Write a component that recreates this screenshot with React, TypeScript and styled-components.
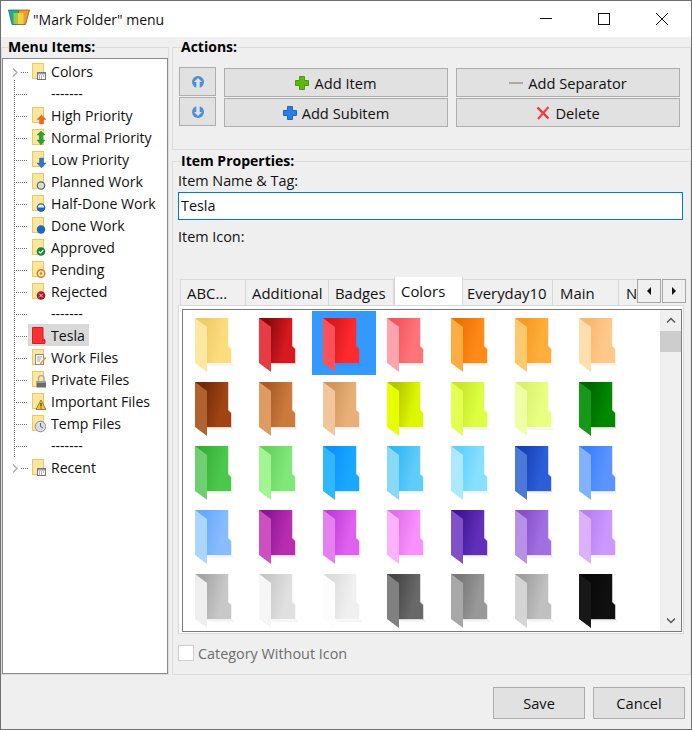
import React, { useId } from "react";
import styled, { createGlobalStyle } from "styled-components";

const GlobalStyle = createGlobalStyle`
  html, body { margin: 0; padding: 0; background: #efefef; }
  body {
    font-family: "Open Sans", "Noto Sans", "Liberation Sans", sans-serif;
    font-size: 14.4px;
    color: #111;
  }
  * { box-sizing: border-box; }
`;

const Window = styled.div`
  width: 692px;
  height: 730px;
  display: flex;
  flex-direction: column;
  border: 1px solid #6f6f6f;
  background: #efefef;
  overflow: hidden;
`;

const TitleBar = styled.div`
  height: 36px;
  flex: none;
  display: flex;
  align-items: center;
  background: #fff;
  padding-left: 7px;
`;

const LogoSlot = styled.div`
  display: flex;
  margin-bottom: 4px;
`;

const TitleText = styled.div`
  margin-left: 3px;
  flex: 1;
  font-size: 14px;
`;

const WinControl = styled.div`
  width: 58px;
  height: 36px;
  display: flex;
  align-items: center;
  justify-content: center;
`;

const Main = styled.div`
  height: 638px;
  flex: none;
  display: flex;
  gap: 3px;
`;

const Group = styled.fieldset`
  margin: 0;
  padding: 0;
  min-width: 0;
  border: 1px solid #dcdcdc;
`;

const GroupTitle = styled.legend<{ $inset: number }>`
  padding: 0;
  margin-left: ${(p) => p.$inset}px;
  height: 20px;
  line-height: 20px;
  font-weight: 700;
  font-size: 14px;
  color: #000;
`;

const MenuGroup = styled(Group)`
  width: 168px;
  height: 638px;
  flex: none;
`;

const TreeBox = styled.div`
  margin-top: 1px;
  height: 616px;
  background: #fff;
  border: 1px solid #8a8a8a;
  padding-top: 1px;
`;

const TreeRow = styled.div`
  height: 22px;
  display: flex;
`;

type GutterKind = "first" | "mid" | "last";

const DOTS_DOWN = "repeating-linear-gradient(to bottom, #777 0 1px, transparent 1px 2px)";
const DOTS_RIGHT = "repeating-linear-gradient(to right, #777 0 1px, transparent 1px 2px)";

const Gutter = styled.div<{ $kind: GutterKind }>`
  width: 25px;
  flex: none;
  display: flex;
  align-items: center;
  padding: 2px 0 0 9px;
  background-image: ${DOTS_DOWN}, ${DOTS_RIGHT};
  background-repeat: no-repeat;
  background-size:
    1px ${(p) => (p.$kind === "mid" ? 22 : 2)}px,
    ${(p) => (p.$kind === "mid" ? 12 : 7)}px 1px;
  background-position:
    11px ${(p) => (p.$kind === "first" ? 20 : 0)}px,
    ${(p) => (p.$kind === "mid" ? 13 : 18)}px 12px;
`;

const TreeItem = styled.div<{ $selected?: boolean }>`
  display: flex;
  align-items: center;
  gap: 5px;
  padding: 0 4px;
  font-size: 14.1px;
  background: ${(p) => (p.$selected ? "#d9d9d9" : "transparent")};
`;

const IconSlot = styled.div`
  width: 14px;
  height: 20px;
  padding-top: 2px;
  flex: none;
  display: flex;
`;

const RightColumn = styled.div`
  flex: 1;
  min-width: 0;
  display: flex;
  flex-direction: column;
`;

const ActionsGroup = styled(Group)`
  height: 113px;
  flex: none;
  padding: 11px 0 0 6px;
`;

const ActionsGrid = styled.div`
  display: grid;
  grid-template-columns: 37px 224px 224px;
  grid-template-rows: 29px 29px;
  column-gap: 8px;
  row-gap: 1px;
`;

const PushButton = styled.button`
  display: flex;
  align-items: center;
  justify-content: center;
  gap: 5px;
  padding: 0;
  background: #e1e1e1;
  border: 1px solid #adadad;
  font: inherit;
  font-size: 14.67px;
  color: #111;
`;

const ArrowButton = styled(PushButton)`
  width: 37px;
  height: 29px;
  margin-top: -1px;
`;

const ActionButton = styled(PushButton)`
  width: 224px;
  height: 29px;
`;

const PropsGroup = styled(Group)`
  margin-top: 1px;
  height: 524px;
  flex: none;
  padding: 0 6px 0 5px;
`;

const FieldLabel = styled.div`
  height: 20px;
  line-height: 20px;
`;

const NameInput = styled.input`
  display: block;
  width: 505px;
  height: 28px;
  margin-top: 1px;
  padding: 0 2px 1px 2px;
  background: #fff;
  border: 1px solid #0078d7;
  outline: none;
  font: inherit;
  color: #111;
`;

const IconLabel = styled(FieldLabel)`
  margin-top: 7px;
`;

const TabHeader = styled.div`
  margin-top: 30px;
  height: 28px;
  display: flex;
  width: 506px;
`;

const TabStrip = styled.div`
  width: 459px;
  flex: none;
  padding-left: 2px;
  display: flex;
  align-items: flex-end;
  overflow: hidden;
`;

const Tab = styled.div<{ $width: number; $pad: number; $active?: boolean }>`
  width: ${(p) => p.$width}px;
  flex: none;
  height: ${(p) => (p.$active ? 29 : 26)}px;
  padding-left: ${(p) => p.$pad}px;
  line-height: ${(p) => (p.$active ? 28 : 27)}px;
  font-size: 14.9px;
  background: ${(p) => (p.$active ? "#fff" : "#f0f0f0")};
  border: 1px solid #d9d9d9;
  border-left-width: ${(p) => (p.$active ? 1 : 0)}px;
  border-bottom: 0;
  white-space: nowrap;
  overflow: hidden;
  &:first-child { border-left-width: 1px; }
`;

const TabArrows = styled.div`
  display: flex;
  gap: 1px;
  margin-top: 2px;
`;

const TabArrow = styled.div`
  width: 24px;
  height: 24px;
  display: flex;
  align-items: center;
  justify-content: center;
  background: #f0f0f0;
  border: 1px solid #a6a6a6;
`;

const TabPanel = styled.div`
  width: 506px;
  height: 329px;
  background: #fff;
  border: 1px solid #d9d9d9;
  padding: 3px 1px 2px 3px;
`;

const IconList = styled.div`
  height: 323px;
  border: 1px solid #7a7a7a;
  display: flex;
  justify-content: space-between;
`;

const IconGrid = styled.div`
  padding: 1px 0 0 1px;
  display: grid;
  grid-template-columns: repeat(7, 64px);
  grid-auto-rows: 64px;
`;

const IconCell = styled.div<{ $selected?: boolean }>`
  padding: 7px 0 0 11px;
  background: ${(p) => (p.$selected ? "#3399ff" : "transparent")};
`;

const ScrollBar = styled.div`
  width: 21px;
  display: flex;
  flex-direction: column;
  background: #f0f0f0;
`;

const ScrollEnd = styled.div`
  height: 21px;
  flex: none;
  display: flex;
  align-items: center;
  justify-content: center;
`;

const ScrollThumb = styled.div`
  height: 21px;
  flex: none;
  background: #cdcdcd;
`;

const ScrollTrack = styled.div`
  flex: 1;
`;

const CheckRow = styled.div`
  margin-top: 11px;
  height: 16px;
  line-height: 18px;
  display: flex;
  gap: 4px;
  color: #6d6d6d;
`;

const CheckBox = styled.div`
  width: 16px;
  height: 16px;
  background: #fff;
  border: 1px solid #cfcfcf;
`;

const Footer = styled.div`
  flex: 1;
  display: flex;
  justify-content: flex-end;
  gap: 8px;
  padding: 12px 6px 0 0;
`;

const FooterButton = styled(PushButton)`
  width: 92px;
  height: 32px;
`;

type FolderTone = [string, string, string];

const FOLDERS: FolderTone[] = [
  ["#edcb68", "#fddc7e", "#ffe7a2"],
  ["#860a10", "#da1820", "#e63c42"],
  ["#d4181f", "#ff2a2e", "#ff5058"],
  ["#f4555f", "#ff7478", "#ffa4ac"],
  ["#ec7208", "#ff8a18", "#ffac42"],
  ["#f59a24", "#ffae3c", "#ffc86a"],
  ["#f8b673", "#ffc98a", "#ffdeae"],
  ["#742a0a", "#a04414", "#b2622e"],
  ["#a85a28", "#cc7a3c", "#de9c62"],
  ["#d0945c", "#e8b078", "#f1c69a"],
  ["#b4c400", "#dcf800", "#e8ff00"],
  ["#c6e630", "#dcff40", "#e4ff50"],
  ["#dcf070", "#e8ff80", "#f0ffa4"],
  ["#006400", "#008800", "#189818"],
  ["#38b038", "#4cc84c", "#70d070"],
  ["#68d060", "#80e878", "#a2f692"],
  ["#1090ff", "#18a8ff", "#30b8ff"],
  ["#30b8f8", "#60ccf8", "#88d8f8"],
  ["#60d0ff", "#88e0ff", "#ace9ff"],
  ["#1840b8", "#2c5ed8", "#4c78d8"],
  ["#3c80ff", "#5a94ff", "#82b2ff"],
  ["#68a8ff", "#88bcff", "#aad6ff"],
  ["#8e1696", "#b82cb0", "#cc50c0"],
  ["#c040d8", "#e060f0", "#e480f0"],
  ["#e070e8", "#f890ff", "#ffb0ff"],
  ["#3e1696", "#6030b8", "#8050c8"],
  ["#8850c8", "#a070e0", "#b890e8"],
  ["#b880f0", "#cc98ff", "#dcb0ff"],
  ["#a6a6a6", "#c8c8c8", "#efefef"],
  ["#c8c8c8", "#e0e0e0", "#f6f6f6"],
  ["#dcdcdc", "#f0f0f0", "#fcfcfc"],
  ["#464646", "#686868", "#808080"],
  ["#787878", "#989898", "#a8a8a8"],
  ["#a0a0a0", "#c0c0c0", "#d4d4d4"],
  ["#080808", "#101010", "#181818"],
];

const Folder = ({ tone }: { tone: FolderTone }) => {
  const id = useId();
  const [dark, light, flap] = tone;
  return (
    <svg width="40" height="56" viewBox="0 0 40 56">
      <defs>
        <linearGradient id={`${id}b`} x1="0" y1="0" x2="1" y2="0.3">
          <stop offset="0.25" stopColor={dark} />
          <stop offset="0.85" stopColor={light} />
        </linearGradient>
      </defs>
      <polygon points="12,46 39,46 38,48 14,48" fill="#000" opacity="0.04" />
      <polygon points="1,0 34,0 34,28 37,31 37,46 11,46" fill={light} opacity="0.25" />
      <polygon points="0,0 33,0 33,28 36,31 36,45 11,45" fill={`url(#${id}b)`} />
      <polygon points="0,0 12,9 12,54 0,45" fill={flap} />
    </svg>
  );
};

type Badge =
  | "calendar" | "high" | "normal" | "low" | "planned" | "half" | "done"
  | "approved" | "pending" | "rejected" | "work" | "lock" | "warn" | "clock";

const BadgeArt = ({ kind }: { kind: Badge }) => {
  switch (kind) {
    case "calendar":
      return (
        <g>
          <rect x="5.500" y="9.500" width="8" height="7" fill="#fff" stroke="#777" />
          <rect x="6" y="10" width="7" height="1.500" fill="#8aa0c0" />
          <path d="M7 13h1M9 13h1M11 13h1M7 15h1M9 15h1" stroke="#c0504d" strokeWidth="1" />
        </g>
      );
    case "high":
      return <path d="M9.500 8 14 12.500h-2.500V17h-4v-4.500H5z" fill="#ef6a10" stroke="#d9480f" strokeWidth="0.400" />;
    case "normal":
      return <path d="M9 2l4 4h-2.200v5H13l-4 5-4-5h2.200V6H5z" fill="#22a838" stroke="#11802a" strokeWidth="0.400" />;
    case "low":
      return <path d="M7.500 7h4v5H14l-4.500 5L5 12h2.500z" fill="#2f74d0" stroke="#1c56a8" strokeWidth="0.400" />;
    case "planned":
      return <circle cx="9" cy="12.500" r="3.700" fill="#f0dea8" stroke="#2a66b8" strokeWidth="1.200" />;
    case "half":
      return (
        <g>
          <circle cx="9" cy="12.500" r="3.700" fill="#f4f0e0" stroke="#1f66c0" strokeWidth="1.200" />
          <path d="M5 12.500h8a4 4 0 0 1-8 0z" fill="#1f66c0" />
        </g>
      );
    case "done":
      return <circle cx="9" cy="12.500" r="4.200" fill="#1f66c0" />;
    case "approved":
      return (
        <g>
          <circle cx="9" cy="12.500" r="4.300" fill="#178a30" />
          <path d="M6.800 12.500l1.700 1.700 2.800-3" fill="none" stroke="#fff" strokeWidth="1.200" />
        </g>
      );
    case "pending":
      return (
        <g>
          <circle cx="9" cy="12.500" r="3.800" fill="#f6e6c0" stroke="#dc7a12" strokeWidth="1.400" />
          <circle cx="9" cy="12.500" r="1.200" fill="#dc7a12" />
        </g>
      );
    case "rejected":
      return (
        <g>
          <circle cx="9" cy="12.500" r="4.300" fill="#a81c2c" />
          <path d="M7.200 10.700l3.600 3.600M10.800 10.700l-3.600 3.600" stroke="#f4d0d0" strokeWidth="1" />
        </g>
      );
    case "work":
      return (
        <g>
          <rect x="3.500" y="5.500" width="8" height="10" fill="#fff" stroke="#8a8a8a" />
          <path d="M5 8h5M5 10h4M5 12h3" stroke="#a0a0a0" strokeWidth="1" />
          <path d="M8 14l5-6 1.300 1-5 6-1.800.600z" fill="#e8a030" />
        </g>
      );
    case "lock":
      return (
        <g>
          <path d="M6.500 10V7.500a2.800 2.800 0 0 1 5.600 0V10" fill="none" stroke="#a8a8a8" strokeWidth="1.300" />
          <rect x="4.500" y="10" width="9.500" height="6.500" fill="#6c6c6c" />
          <rect x="4.500" y="10" width="9.500" height="2" fill="#a0a0a0" />
        </g>
      );
    case "warn":
      return (
        <g>
          <path d="M9 7l5 9.500H4z" fill="#f4c430" stroke="#7a5a10" strokeWidth="0.700" />
          <path d="M9 10v3.500M9 14.500v1" stroke="#222" strokeWidth="1" />
        </g>
      );
    case "clock":
      return (
        <g>
          <circle cx="8.500" cy="11.500" r="5.300" fill="#d8dde4" stroke="#8a8f96" />
          <path d="M8.500 11.500V8M8.500 11.500l2.500 1.500" stroke="#555" strokeWidth="0.900" fill="none" />
        </g>
      );
  }
};

const MiniFolder = ({ badge }: { badge: Badge }) => (
  <svg width="14" height="18" viewBox="0 0 14 18">
    <rect x="0.500" y="0.500" width="11" height="15" fill="#fde6a0" stroke="#eec858" />
    <BadgeArt kind={badge} />
  </svg>
);

const RedFolder = () => (
  <svg width="14" height="18" viewBox="0 0 14 18">
    <path d="M0.500 0.500h10.500v11l2 1.500v3.500H0.500z" fill="#ff3034" stroke="#dc1c22" />
    <path d="M10 13h3" stroke="#c81a20" />
  </svg>
);

const Chevron = () => (
  <svg width="6" height="9" viewBox="0 0 6 9">
    <path d="M1 0.500 5 4.500 1 8.500" fill="none" stroke="#a8a8a8" strokeWidth="1.300" />
  </svg>
);

const RoundArrow = ({ down }: { down?: boolean }) => (
  <svg width="12" height="12" viewBox="0 0 12 12">
    <circle cx="6" cy="6" r="6" fill="#4a90d9" />
    <path
      d={down ? "M6 10 10 6H7.700V0H4.300v6H2z" : "M6 2 10 6H7.700v6H4.300V6H2z"}
      fill="#e1e1e1"
    />
  </svg>
);

const PlusIcon = ({ fill, edge }: { fill: string; edge: string }) => (
  <svg width="14" height="14" viewBox="0 0 14 14">
    <path d="M4.500 0.500h5v4h4v5h-4v4h-5v-4h-4v-5h4z" fill={fill} stroke={edge} />
  </svg>
);

const DashIcon = () => (
  <svg width="14" height="14" viewBox="0 0 14 14">
    <rect x="0" y="6" width="14" height="2" fill="#adaa9c" />
  </svg>
);

const CrossIcon = () => (
  <svg width="14" height="14" viewBox="0 0 14 14">
    <path d="M1.500 1.500 12.500 12.500" stroke="#e6343c" strokeWidth="2.400" />
    <path d="M12.500 1 2 13" stroke="#f0454c" strokeWidth="2.200" />
  </svg>
);

const AppLogo = () => (
  <svg width="22" height="16" viewBox="0 0 22 16">
    <path d="M0.500 1 10.500 1V15.500H4z" fill="#1fa99a" stroke="#2f6f66" strokeWidth="0.800" />
    <path d="M10.500 1H21.500L17.500 15.500H10.500z" fill="#ee9a2e" stroke="#8a5a1c" strokeWidth="0.800" />
    <rect x="5.500" y="4" width="4.500" height="11" fill="#9ccc3c" />
    <rect x="10" y="4" width="5.500" height="11" fill="#f6cf3e" />
  </svg>
);

const TabTriangle = ({ right }: { right?: boolean }) => (
  <svg width="6" height="8" viewBox="0 0 6 8">
    <path d={right ? "M1 0 5 4 1 8z" : "M5 0 1 4 5 8z"} fill="#111" />
  </svg>
);

const ScrollChevron = ({ down }: { down?: boolean }) => (
  <svg width="10" height="7" viewBox="0 0 10 7">
    <path d={down ? "M1 1.500 5 5.500 9 1.500" : "M1 5.500 5 1.500 9 5.500"} fill="none" stroke="#555" strokeWidth="1.500" />
  </svg>
);

type TreeEntry = { label: string; badge?: Badge; red?: boolean; selected?: boolean; kind?: GutterKind };

const SEP = "-------";

const TREE: TreeEntry[] = [
  { label: "Colors", badge: "calendar", kind: "first" },
  { label: SEP },
  { label: "High Priority", badge: "high" },
  { label: "Normal Priority", badge: "normal" },
  { label: "Low Priority", badge: "low" },
  { label: "Planned Work", badge: "planned" },
  { label: "Half-Done Work", badge: "half" },
  { label: "Done Work", badge: "done" },
  { label: "Approved", badge: "approved" },
  { label: "Pending", badge: "pending" },
  { label: "Rejected", badge: "rejected" },
  { label: SEP },
  { label: "Tesla", red: true, selected: true },
  { label: "Work Files", badge: "work" },
  { label: "Private Files", badge: "lock" },
  { label: "Important Files", badge: "warn" },
  { label: "Temp Files", badge: "clock" },
  { label: SEP },
  { label: "Recent", badge: "calendar", kind: "last" },
];

const TABS = [
  { label: "ABC...", width: 66, pad: 6 },
  { label: "Additional", width: 83, pad: 6 },
  { label: "Badges", width: 65, pad: 6 },
  { label: "Colors", width: 69, pad: 6, active: true },
  { label: "Everyday10", width: 90, pad: 4 },
  { label: "Main", width: 66, pad: 7 },
  { label: "N", width: 60, pad: 7 },
];

export default function App() {
  return (
    <>
      <GlobalStyle />
      <Window>
        <TitleBar>
          <LogoSlot><AppLogo /></LogoSlot>
          <TitleText>"Mark Folder" menu</TitleText>
          <WinControl>
            <svg width="12" height="12" viewBox="0 0 12 12">
              <path d="M0 5.500h12" stroke="#111" />
            </svg>
          </WinControl>
          <WinControl>
            <svg width="12" height="12" viewBox="0 0 12 12">
              <rect x="0.500" y="0.500" width="11" height="11" fill="none" stroke="#111" />
            </svg>
          </WinControl>
          <WinControl>
            <svg width="12" height="12" viewBox="0 0 12 12">
              <path d="M0 0 12 12M12 0 0 12" stroke="#111" />
            </svg>
          </WinControl>
        </TitleBar>
        <Main>
          <MenuGroup>
            <GroupTitle $inset={6}>Menu Items:</GroupTitle>
            <TreeBox>
              {TREE.map((entry, i) => (
                <TreeRow key={i}>
                  <Gutter $kind={entry.kind ?? "mid"}>{entry.kind && <Chevron />}</Gutter>
                  <TreeItem $selected={entry.selected}>
                    <IconSlot>
                      {entry.badge && <MiniFolder badge={entry.badge} />}
                      {entry.red && <RedFolder />}
                    </IconSlot>
                    {entry.label}
                  </TreeItem>
                </TreeRow>
              ))}
            </TreeBox>
          </MenuGroup>
          <RightColumn>
            <ActionsGroup>
              <GroupTitle $inset={2}>Actions:</GroupTitle>
              <ActionsGrid>
                <ArrowButton><RoundArrow /></ArrowButton>
                <ActionButton><PlusIcon fill="#5cb80c" edge="#4a9a0a" /> Add Item</ActionButton>
                <ActionButton><DashIcon /> Add Separator</ActionButton>
                <ArrowButton><RoundArrow down /></ArrowButton>
                <ActionButton><PlusIcon fill="#2a7de1" edge="#1c66c4" /> Add Subitem</ActionButton>
                <ActionButton><CrossIcon /> Delete</ActionButton>
              </ActionsGrid>
            </ActionsGroup>
            <PropsGroup>
              <GroupTitle $inset={3}>Item Properties:</GroupTitle>
              <FieldLabel>Item Name &amp; Tag:</FieldLabel>
              <NameInput defaultValue="Tesla" />
              <IconLabel>Item Icon:</IconLabel>
              <TabHeader>
                <TabStrip>
                  {TABS.map((tab) => (
                    <Tab key={tab.label} $width={tab.width} $pad={tab.pad} $active={tab.active}>
                      {tab.label}
                    </Tab>
                  ))}
                </TabStrip>
                <TabArrows>
                  <TabArrow><TabTriangle /></TabArrow>
                  <TabArrow><TabTriangle right /></TabArrow>
                </TabArrows>
              </TabHeader>
              <TabPanel>
                <IconList>
                  <IconGrid>
                    {FOLDERS.map((tone, i) => (
                      <IconCell key={i} $selected={i === 2}>
                        <Folder tone={tone} />
                      </IconCell>
                    ))}
                  </IconGrid>
                  <ScrollBar>
                    <ScrollEnd><ScrollChevron /></ScrollEnd>
                    <ScrollThumb />
                    <ScrollTrack />
                    <ScrollEnd><ScrollChevron down /></ScrollEnd>
                  </ScrollBar>
                </IconList>
              </TabPanel>
              <CheckRow>
                <CheckBox />
                Category Without Icon
              </CheckRow>
            </PropsGroup>
          </RightColumn>
        </Main>
        <Footer>
          <FooterButton>Save</FooterButton>
          <FooterButton>Cancel</FooterButton>
        </Footer>
      </Window>
    </>
  );
}
